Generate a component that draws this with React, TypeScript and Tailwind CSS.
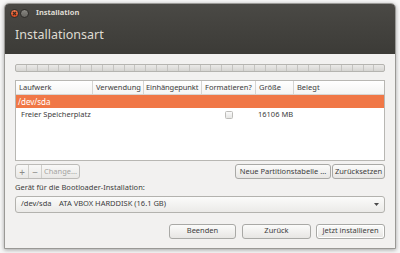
import React from "react";

const font = { fontFamily: '"Noto Sans", "DejaVu Sans", sans-serif' };

function Btn({ children, className = "", disabled = false }: { children: React.ReactNode; className?: string; disabled?: boolean }) {
  return (
    <div
      className={`flex items-center justify-center rounded-[3px] border border-[#a9a9a6] bg-gradient-to-b from-[#fbfbfa] to-[#e7e6e4] text-[7.5px] leading-none ${disabled ? "text-[#a5a4a1]" : "text-[#3c3c3c]"} ${className}`}
    >
      {children}
    </div>
  );
}

export default function App() {
  const segs = Array.from({ length: 34 });
  return (
    <div className="w-[400px] h-[253px] bg-[#f7f7f7] overflow-hidden pt-[3px] pl-[4px]" style={font}>
      <div className="w-[392px] h-[246px] flex flex-col rounded-t-[5px] bg-[#f2f1f0] border border-[#9a9996] shadow-[0_1px_4px_rgba(0,0,0,0.35)] overflow-hidden">
        {/* dark header */}
        <div className="h-[50px] bg-gradient-to-b from-[#4a4945] to-[#3c3b37] flex flex-col">
          <div className="h-[17px] flex items-center pl-[5px] pt-[1px]">
            <div className="w-[9px] h-[9px] rounded-full bg-gradient-to-b from-[#f07a4e] to-[#d9471d] border border-[#2e2d2a] flex items-center justify-center">
              <svg width="5" height="5" viewBox="0 0 5 5">
                <path d="M1 1L4 4M4 1L1 4" stroke="#3a2a22" strokeWidth="1.2" />
              </svg>
            </div>
            <div className="ml-[1px] w-[9px] h-[9px] rounded-full bg-gradient-to-b from-[#8a8984] to-[#65645f] border border-[#2e2d2a]" />
            <span className="ml-[7px] text-[7.5px] font-bold text-[#dfdbd2] leading-none">Installation</span>
          </div>
          <div className="pl-[10px] mt-[8px] text-[12.5px] text-[#dfdbd2] leading-none">Installationsart</div>
        </div>
        {/* content */}
        <div className="flex-1 flex flex-col px-[10px]">
          {/* progress */}
          <div className="mt-[10px] h-[8px] flex border border-[#b5b4b0] rounded-[2px] bg-gradient-to-b from-[#ebeae8] to-[#d6d5d2] overflow-hidden">
            {segs.map((_, i) => (
              <div key={i} className="flex-1 border-r border-[#c4c3c0] last:border-r-0" />
            ))}
          </div>
          {/* table */}
          <div className="mt-[8px] h-[81px] bg-white border border-[#b8b7b3] flex flex-col text-[7.5px] text-[#3c3c3c] leading-none">
            <div className="h-[14px] flex items-center border-b border-[#d6d5d2] bg-gradient-to-b from-white to-[#f4f4f3]">
              <div className="w-[77px] h-full flex items-center pl-[3px] border-r border-[#d6d5d2]">Laufwerk</div>
              <div className="w-[51px] h-full flex items-center pl-[3px] border-r border-[#d6d5d2]">Verwendung</div>
              <div className="w-[58px] h-full flex items-center pl-[2px] border-r border-[#d6d5d2] tracking-[-0.1px]">Einhängepunkt</div>
              <div className="w-[54px] h-full flex items-center pl-[3px] border-r border-[#d6d5d2]">Formatieren?</div>
              <div className="w-[38px] h-full flex items-center pl-[3px] border-r border-[#d6d5d2]">Größe</div>
              <div className="flex-1 h-full flex items-center pl-[3px]">Belegt</div>
            </div>
            <div className="h-[13px] flex items-center pl-[2px] bg-[#f07746] text-white text-[8px]">/dev/sda</div>
            <div className="h-[13px] flex items-center">
              <div className="w-[186px] pl-[5px]">Freier Speicherplatz</div>
              <div className="w-[54px] flex justify-center">
                <div className="w-[8px] h-[8px] rounded-[1.5px] border border-[#bdbcb9] bg-gradient-to-b from-[#fafafa] to-[#e6e6e4]" />
              </div>
              <div className="pl-[2px]">16106 MB</div>
            </div>
          </div>
          {/* buttons row */}
          <div className="mt-[3px] h-[15px] flex">
            <div className="flex h-full rounded-[3px] border border-[#bcbbb8] bg-gradient-to-b from-[#f8f8f7] to-[#e9e8e6] text-[#8c8b88] overflow-hidden">
              <div className="w-[13px] flex items-center justify-center border-r border-[#cfceca] text-[10px] leading-none">+</div>
              <div className="w-[13px] flex items-center justify-center border-r border-[#cfceca] text-[10px] leading-none">−</div>
              <div className="w-[37px] flex items-center justify-center text-[7.5px] text-[#a5a4a1] leading-none">Change...</div>
            </div>
            <div className="flex-1" />
            <Btn className="w-[96px]">Neue Partitionstabelle ...</Btn>
            <Btn className="ml-[1px] w-[53px]">Zurücksetzen</Btn>
          </div>
          <div className="mt-[5px] text-[7.5px] text-[#3c3c3c] leading-none">Gerät für die Bootloader-Installation:</div>
          <div className="mt-[4px] h-[17px] flex items-center rounded-[3px] border border-[#b3b2ae] bg-gradient-to-b from-[#fbfbfa] to-[#ebeae8] text-[7.5px] text-[#3c3c3c] leading-none">
            <span className="pl-[5px] w-[43px]">/dev/sda</span>
            <span>ATA VBOX HARDDISK (16.1 GB)</span>
            <div className="flex-1" />
            <svg width="5" height="3" viewBox="0 0 5 3" className="mr-[5px]">
              <path d="M0 0H5L2.5 3Z" fill="#4a4a4a" />
            </svg>
          </div>
          <div className="mt-[11px] h-[15px] flex">
            <div className="flex-1" />
            <Btn className="w-[67px]">Beenden</Btn>
            <Btn className="ml-[6px] w-[69px]">Zurück</Btn>
            <Btn className="ml-[5px] w-[69px] border-[#8f8e8a] shadow-[inset_0_0_0_1px_#ffffff]">Jetzt installieren</Btn>
          </div>
        </div>
      </div>
    </div>
  );
}
